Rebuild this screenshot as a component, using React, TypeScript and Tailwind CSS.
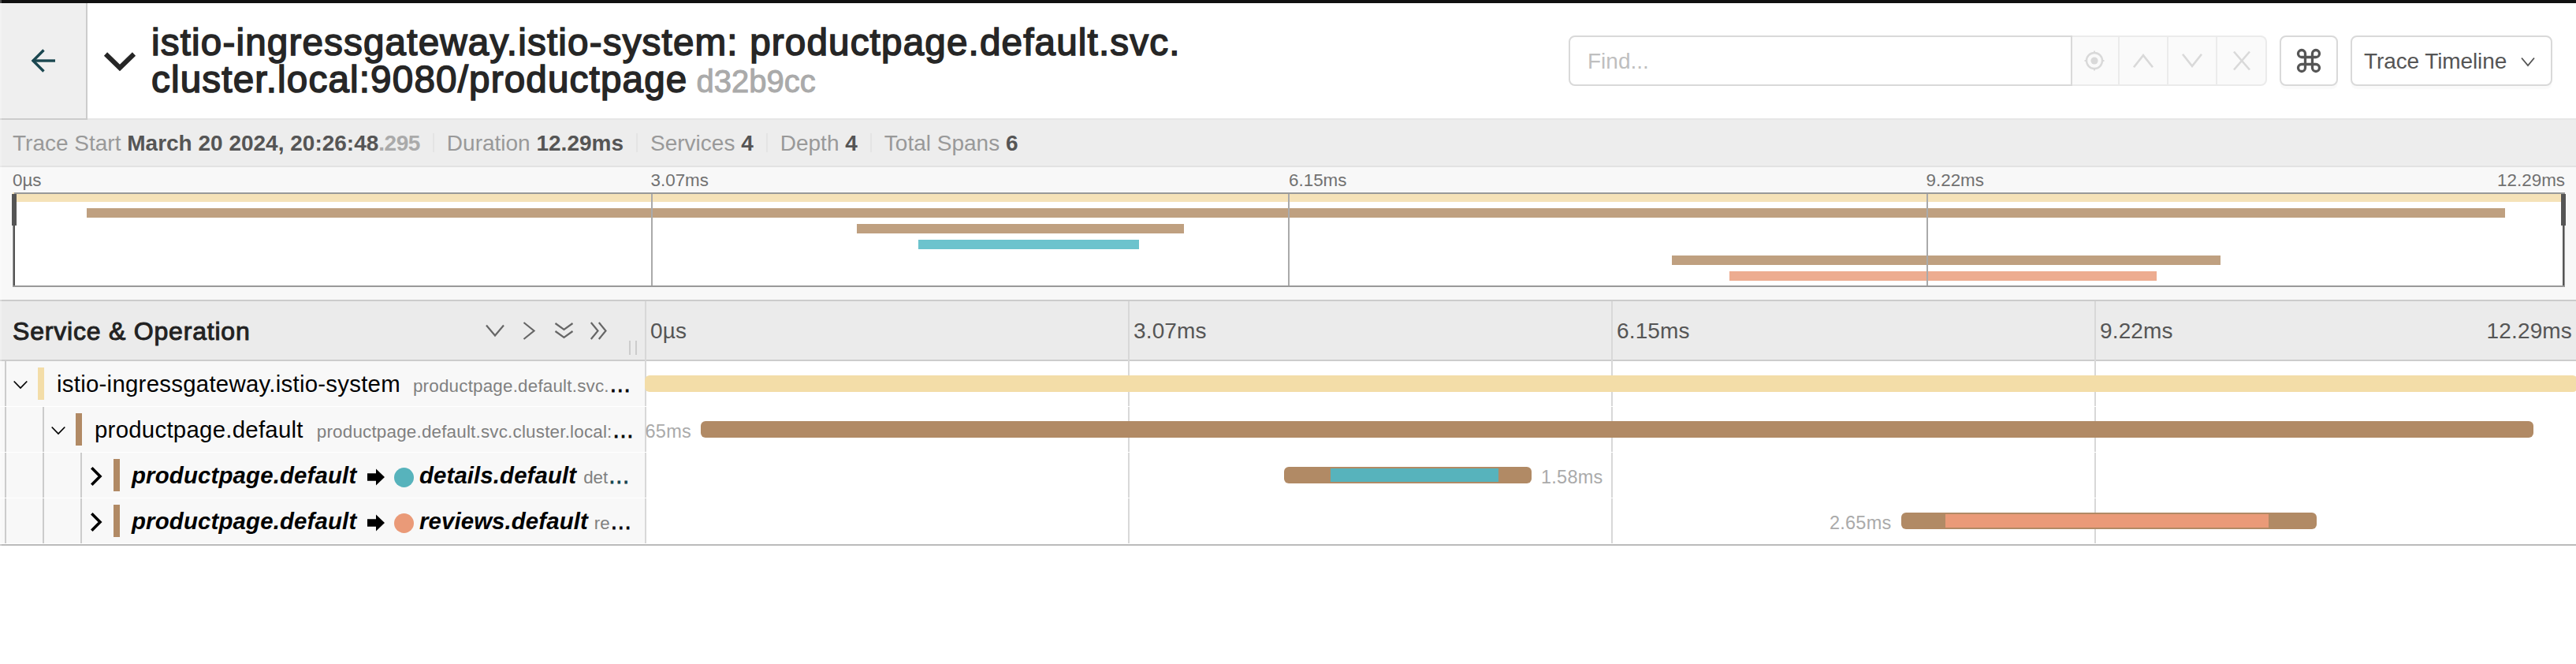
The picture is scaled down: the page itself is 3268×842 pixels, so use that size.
import React from "react";
import { Command } from "lucide-react";

function Line({ w, h, points, stroke, className = "" }: { w: number; h: number; points: string[]; stroke: number; className?: string }) {
  return (
    <svg width={w} height={h} viewBox={`0 0 ${w} ${h}`} className={`block shrink-0 overflow-visible ${className}`}>
      {points.map((p) => (
        <polyline key={p} points={p} fill="none" stroke="currentColor" strokeWidth={stroke} />
      ))}
    </svg>
  );
}

const START = 16;
const MINI_WIDTH = 3238;

const miniSpans = [
  { row: 0, from: 16, to: 3254, color: "bg-[#f5e2b8]" },
  { row: 1, from: 110, to: 3178, color: "bg-[#bfa080]" },
  { row: 2, from: 1087, to: 1502, color: "bg-[#bfa080]" },
  { row: 3, from: 1165, to: 1445, color: "bg-[#6cc3cd]" },
  { row: 4, from: 2120.5, to: 2817, color: "bg-[#bfa080]" },
  { row: 5, from: 2194, to: 2736, color: "bg-[#edac90]" },
];

function Stat({ label, value, extra, last }: { label: string; value: string; extra?: string; last?: boolean }) {
  return (
    <div className={`flex h-6 items-center whitespace-pre pr-4 ${last ? "" : "mr-4 border-r-2 border-[#e4e4e4]"}`}>
      <span className="pt-[2px] text-[#999]">{label} </span>
      <span className="pt-[2px] font-bold text-[#555]">{value}</span>
      {extra && <span className="pt-[2px] font-bold tracking-[-0.5px] text-[#aaa]">{extra}</span>}
    </div>
  );
}

function Header() {
  return (
    <header className="flex h-[148px] bg-white">
      <div className="flex h-[148px] w-[111px] shrink-0 items-center border-b-2 border-r-2 border-[#ccc] bg-[#efefef] pl-10 text-[#1b4750]">
        <Line w={30} h={30} points={["15.5,1.5 2,15 15.5,28.5", "1.5,15 30,15"]} stroke={3.4} />
      </div>
      <div className="flex grow border-b-2 border-[#e6e6e6]">
        <div className="ml-[21px] mr-5 mt-[61px] text-[#262626]">
          <Line w={40} h={25} points={["2,3.5 20,21 38,3.5"]} stroke={6} />
        </div>
        <h1 className="mt-[26px] w-[1400px] whitespace-pre text-[47.6px] leading-[47px] tracking-[1.16px] text-[#262626] [-webkit-text-stroke:1.6px_#262626]">
          istio-ingressgateway.istio-system: productpage.default.svc.
          <br />
          cluster.local:9080/productpage
          <span className="ml-[11px] text-[40px] tracking-[0px] text-[#aaa] [-webkit-text-stroke:1px_#aaa]">d32b9cc</span>
        </h1>
        <div className="ml-auto mr-8 mt-[41px] flex h-16">
          <div className="flex h-16 w-[639px] items-center rounded-l-lg border-2 border-[#d9d9d9] pl-[22px] pt-[2px] text-[#bfbfbf]">Find...</div>
          <div className="mr-4 flex w-[247px] rounded-r-lg border-y-2 border-r-2 border-[#ebebeb] bg-[#fafafa] text-[#d9d9d9]">
            <div className="flex w-[60px] items-center justify-center border-r-2 border-[#ebebeb] pr-[3px]">
              <svg width="26" height="26" viewBox="-13 -13 26 26" fill="none" stroke="currentColor">
                <circle r="10" strokeWidth="2.4" />
                <circle r="4.6" fill="currentColor" stroke="none" />
                <path d="M0-12.5V-9M0 12.5V9M-12.5 0H-9M12.5 0H9" strokeWidth="2" />
              </svg>
            </div>
            <div className="flex w-[62px] items-center justify-center border-r-2 border-[#ebebeb]">
              <Line w={26} h={18} points={["1,17.3 13,2.2 25,17.3"]} stroke={2.6} />
            </div>
            <div className="flex w-[62px] items-center justify-center border-r-2 border-[#ebebeb]">
              <Line w={26} h={18} points={["1,0.7 13,15.8 25,0.7"]} stroke={2.6} />
            </div>
            <div className="flex grow items-center justify-center">
              <Line w={22} h={24} points={["1,0.5 21,23.5", "21,0.5 1,23.5"]} stroke={2.6} />
            </div>
          </div>
          <div className="mr-4 flex w-[74px] items-center justify-center rounded-lg border-2 border-[#d9d9d9] text-[#555] shadow-[0_4px_0_rgba(0,0,0,0.02)]">
            <Command size={36} strokeWidth={2.2} />
          </div>
          <div className="flex w-[256px] items-center rounded-lg border-2 border-[#d9d9d9] pl-[15px] tracking-[-0.1px] text-[#555] shadow-[0_4px_0_rgba(0,0,0,0.02)]">
            <span className="w-[199px] pt-[2px]">Trace Timeline</span>
            <Line w={18} h={11} points={["1,0.5 9,10 17,0.5"]} stroke={1.8} className="mt-[2px]" />
          </div>
        </div>
      </div>
    </header>
  );
}

function Minimap() {
  return (
    <section className="h-[168px] bg-[#f8f8f8] px-4">
      <div className="grid h-8 grid-cols-4 pt-px text-[22.4px] leading-8 text-[#717171]">
        <span>0µs</span>
        <span>3.07ms</span>
        <span>6.15ms</span>
        <div className="-ml-px flex justify-between">
          <span>9.22ms</span>
          <span>12.29ms</span>
        </div>
      </div>
      <div className="relative h-[120px] border-2 border-[#999] bg-white">
        {miniSpans.map((s) => (
          <div
            key={s.row}
            className={`absolute h-3 ${s.color}`}
            style={{ left: s.from - START - 2, width: Math.min(s.to, START + MINI_WIDTH - 2) - s.from, top: s.row * 20 - 2 }}
          />
        ))}
        <div className="absolute -top-[2px] left-0 h-[2px] w-full bg-[#999]" />
        <div className="absolute inset-0 -left-[2px] -right-[2px] grid grid-cols-4">
          <div />
          <div className="border-l-2 border-[#aaa]" />
          <div className="-ml-px border-l-2 border-[#aaa]" />
          <div className="-ml-px border-l-2 border-[#aaa]" />
        </div>
        <div className="absolute -left-px top-0 h-full w-[2px] bg-[#555]" />
        <div className="absolute -left-[3px] top-0 h-10 w-[6px] bg-[#555]" />
        <div className="absolute -right-px top-0 h-full w-[2px] bg-[#555]" />
        <div className="absolute -right-[3px] top-0 h-10 w-[6px] bg-[#555]" />
      </div>
    </section>
  );
}

function TimelineHeader() {
  return (
    <div className="flex h-[78px] border-y-2 border-[#ccc] bg-[#ebebeb]">
      <div className="relative flex w-[818px] shrink-0 items-center pl-4 text-[#666]">
        <h2 className="w-[600px] pt-[2px] text-[32px] tracking-[0.8px] text-[#222] [-webkit-text-stroke:1px_#222]">Service &amp; Operation</h2>
        <div className="flex items-center">
          <Line w={24} h={15} points={["1,0.5 12,13.5 23,0.5"]} stroke={2.2} className="mr-6" />
          <Line w={15} h={23} points={["0.5,1 13.5,11.5 0.5,22"]} stroke={2.2} className="mr-[25px]" />
          <Line w={23} h={21} points={["0.5,1 11.5,9 22.5,1", "0.5,11 11.5,19 22.5,11"]} stroke={2.2} className="mr-[22px]" />
          <Line w={21} h={23} points={["0.8,1 9.5,11.5 0.8,22", "10.8,1 19.5,11.5 10.8,22"]} stroke={2.2} />
        </div>
        <div className="absolute bottom-[6px] right-[10px] h-[18px] w-[10px] border-x-2 border-[#ccc]" />
      </div>
      <div className="grid h-[74px] grow grid-cols-4 leading-[76px] tracking-[0.15px] text-[#555]">
        <div className="border-l-2 border-[#d8d8d8] pl-[5px]">0µs</div>
        <div className="border-l-2 border-[#d8d8d8] pl-[5px]">3.07ms</div>
        <div className="border-l-2 border-[#d8d8d8] pl-[5px]">6.15ms</div>
        <div className="flex justify-between border-l-2 border-[#d8d8d8] pl-[5px] pr-[7px]">
          <span>9.22ms</span>
          <span>12.29ms</span>
        </div>
      </div>
    </div>
  );
}

type Row = {
  depth: number;
  open: boolean;
  color: string;
  name: string;
  target?: string;
  dot?: string;
  op: string;
  opGap: string;
  dots: string;
  bar: [number, number];
  inner?: [number, number];
  label?: string;
  labelSide?: "left" | "right";
};

const rows: Row[] = [
  { depth: 0, open: true, color: "bg-[#f3dda8]", name: "istio-ingressgateway.istio-system", op: "productpage.default.svc.", opGap: "ml-[16px]", dots: "text-black", bar: [0, 2452] },
  { depth: 1, open: true, color: "bg-[#b18a65]", name: "productpage.default", op: "productpage.default.svc.cluster.local:", opGap: "ml-[17px]", dots: "text-black", bar: [71, 2396], label: "65ms", labelSide: "left" },
  { depth: 2, open: false, color: "bg-[#b18a65]", name: "productpage.default", target: "details.default", dot: "bg-[#57b3bc]", op: "det", opGap: "ml-[9px]", dots: "text-[#11434f]", bar: [811, 1125], inner: [870, 1082.5], label: "1.58ms", labelSide: "right" },
  { depth: 2, open: false, color: "bg-[#b18a65]", name: "productpage.default", target: "reviews.default", dot: "bg-[#ea9a78]", op: "re", opGap: "ml-[8px]", dots: "text-black", bar: [1593.5, 2121], inner: [1650, 2060], label: "2.65ms", labelSide: "left" },
];

function SpanRow({ r }: { r: Row }) {
  return (
    <div className="flex h-[58px] border-b border-white">
      <div className="flex w-[818px] shrink-0 overflow-hidden bg-[#f8f8f8]">
        {Array.from({ length: r.depth + 1 }, (_, i) => (
          <div key={i} className={`w-2 shrink-0 border-r-2 border-[#ccc] ${i > 0 ? "ml-10" : ""}`} />
        ))}
        <div className="flex w-10 shrink-0 items-center pl-[9px] text-black">
          {r.open ? (
            <Line w={18} h={10} points={["0.7,0.5 9,9 17.3,0.5"]} stroke={1.7} className="mt-[2px]" />
          ) : (
            <Line w={15} h={24} points={["1.3,1.3 12,12 1.3,22.7"]} stroke={3.6} className="ml-[2px] mt-[2px]" />
          )}
        </div>
        <div className={`mt-2 h-[41px] w-2 shrink-0 ${r.color}`} />
        {r.target ? (
          <div className="ml-[15px] flex h-[57px] items-baseline whitespace-pre text-[29.4px] leading-[57px] text-black">
            <span className="w-[290px] font-bold italic tracking-[0.15px]">{r.name}</span>
            <svg width="22" height="22" viewBox="0 0 22 22" className="ml-[9px] shrink-0 translate-y-[3px]">
              <path d="M0 6.3H11V0.5L22 11L11 21.5V15.7H0Z" fill="currentColor" />
            </svg>
            <span className={`ml-[12px] mr-[7px] size-[25px] shrink-0 translate-y-[5px] rounded-full ${r.dot}`} />
            <span className="font-bold italic tracking-[0.1px]">{r.target}</span>
            <span className={`text-[22.4px] text-[#808080] ${r.opGap}`}>{r.op}</span>
            <span className={`text-[28px] [-webkit-text-stroke:0.8px_currentColor] ${r.dots}`}>…</span>
          </div>
        ) : (
          <div className="ml-4 flex h-[57px] items-baseline whitespace-pre text-[29.4px] leading-[57px] text-black">
            <span className="tracking-[0.26px]">{r.name}</span>
            <span className={`text-[22.4px] tracking-[0.2px] text-[#808080] ${r.opGap}`}>{r.op}</span>
            <span className={`text-[28px] [-webkit-text-stroke:0.8px_currentColor] ${r.dots}`}>…</span>
          </div>
        )}
      </div>
      <div className="relative grow overflow-hidden">
        <div className="grid h-full grid-cols-4">
          <div className="border-l-2 border-[#d8d8d8]" />
          <div className="border-l-2 border-[#d8d8d8]" />
          <div className="border-l-2 border-[#d8d8d8]" />
          <div className="border-l-2 border-[#d8d8d8]" />
        </div>
        <div className={`absolute top-[18px] h-[21px] rounded-[6px] ${r.color}`} style={{ left: r.bar[0], width: r.bar[1] - r.bar[0] }}>
          {r.inner && (
            <div
              className={`absolute top-[2px] h-[17px] ${r.dot}`}
              style={{ left: r.inner[0] - r.bar[0], width: r.inner[1] - r.inner[0] }}
            />
          )}
          {r.label && (
            <span className={`absolute top-0 text-[23.5px] leading-[26px] tracking-[0.25px] text-[#aaa] ${r.labelSide === "left" ? "right-full mr-3" : "left-full ml-3"}`}>
              {r.label}
            </span>
          )}
        </div>
      </div>
    </div>
  );
}

export default function App() {
  return (
    <div className="relative h-[842px] w-full overflow-hidden bg-white font-['Liberation_Sans',Arial,sans-serif] text-[28px] leading-normal">
      <div className="w-[3270px]">
        <div className="h-1 bg-[#111]" />
        <Header />
        <div className="flex h-[60px] items-center border-b-2 border-[#e2e2e2] bg-[#ededed] pl-4">
          <Stat label="Trace Start" value="March 20 2024, 20:26:48" extra=".295" />
          <Stat label="Duration" value="12.29ms" />
          <Stat label="Services" value="4" />
          <Stat label="Depth" value="4" />
          <Stat label="Total Spans" value="6" last />
        </div>
        <Minimap />
        <TimelineHeader />
        <main className="border-b-2 border-[#bbb]">
          {rows.map((r, i) => (
            <SpanRow key={i} r={r} />
          ))}
        </main>
      </div>
      <div className="absolute left-0 top-0 h-[692px] w-[2px] bg-white/25" />
    </div>
  );
}
